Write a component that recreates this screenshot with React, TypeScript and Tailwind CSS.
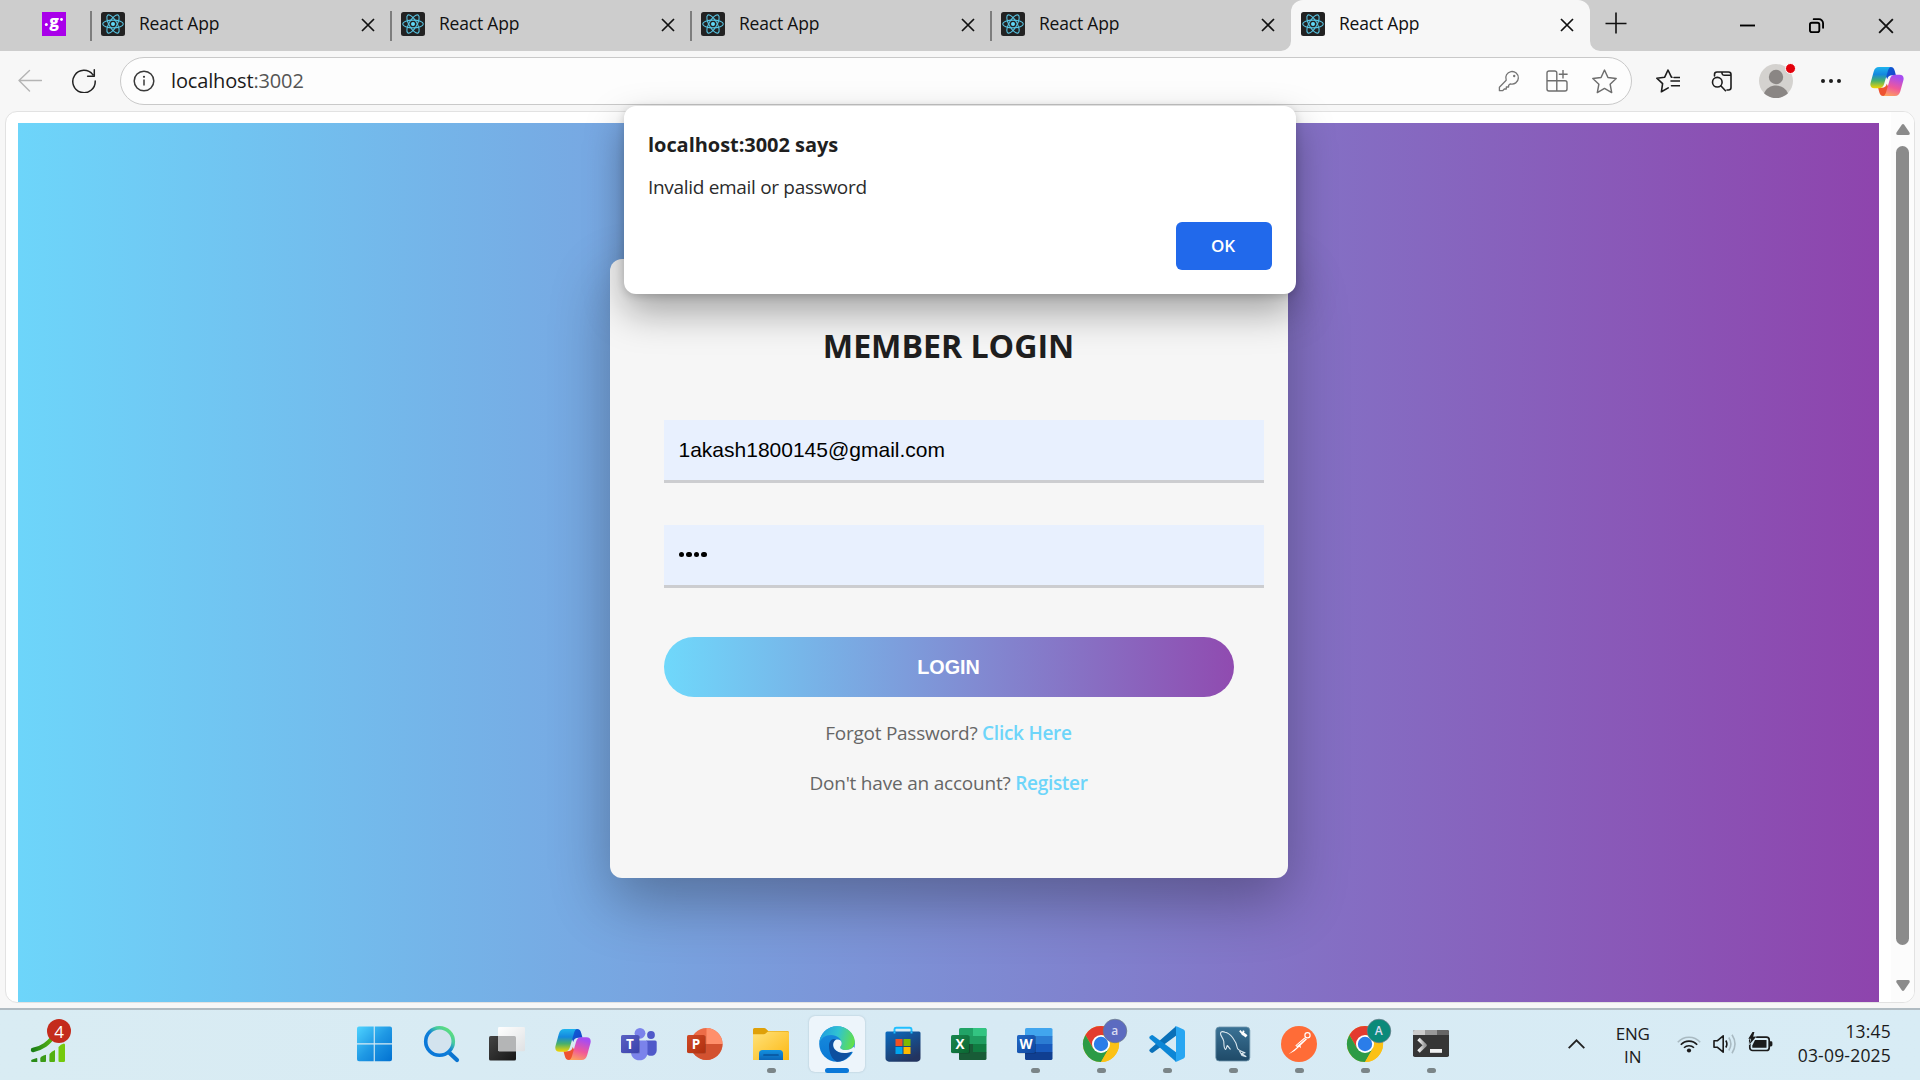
import type { ReactNode } from 'react';

function ReactIcon() {
  return (
    <svg viewBox="0 0 24 24" className="size-6 shrink-0">
      <rect width="24" height="24" rx="2.5" fill="#222222" />
      <g fill="none" stroke="#58c4e2" strokeWidth="1.1">
        <ellipse cx="12" cy="12" rx="10.3" ry="3.9" />
        <ellipse cx="12" cy="12" rx="10.3" ry="3.9" transform="rotate(60 12 12)" />
        <ellipse cx="12" cy="12" rx="10.3" ry="3.9" transform="rotate(120 12 12)" />
      </g>
      <circle cx="12" cy="12" r="2" fill="#61dafb" />
    </svg>
  );
}

function CloseX({ size = 14, w = 1.7 }: { size?: number; w?: number }) {
  return (
    <svg viewBox="0 0 14 14" width={size} height={size} className="shrink-0">
      <path d="M1 1L13 13M13 1L1 13" stroke="#111" strokeWidth={w} fill="none" />
    </svg>
  );
}

function Tab({ active = false }: { active?: boolean }) {
  return (
    <div
      className={
        active
          ? 'relative flex h-[51px] w-[299px] items-start rounded-t-xl bg-[#f7f7f7] pt-3 pr-4 pl-[10px]'
          : 'flex h-[51px] w-[300px] items-start pt-3 pr-4'
      }
    >
      {!active && <div className="-mt-px mr-[9px] ml-[-1px] h-[30px] w-[2px] bg-[#7d7d7d]" />}
      <ReactIcon />
      <span className="-mt-px ml-[14px] flex-1 text-[17.5px] leading-6 tracking-[-0.2px] text-[#111]">React App</span>
      <span className="mt-[6px]">
        <CloseX />
      </span>
      {active && (
        <>
          <svg viewBox="0 0 10 10" className="absolute bottom-0 -left-[10px] size-[10px]">
            <path d="M10 0V10H0A10 10 0 0 0 10 0Z" fill="#f7f7f7" />
          </svg>
          <svg viewBox="0 0 10 10" className="absolute -right-[10px] bottom-0 size-[10px]">
            <path d="M0 0V10H10A10 10 0 0 1 0 0Z" fill="#f7f7f7" />
          </svg>
        </>
      )}
    </div>
  );
}

function TabBar() {
  return (
    <div className="flex h-[51px] bg-[#cdcdcd]">
      <div className="flex w-[91px] items-start pt-3 pl-[42px]">
        <svg viewBox="0 0 24 24" className="size-6">
          <rect width="24" height="24" fill="#a900ea" />
          <text x="12" y="15.3" fill="#fff" fontSize="16" fontWeight="800" textAnchor="middle" fontFamily="Open Sans, sans-serif">g</text>
          <circle cx="4.3" cy="12.4" r="1.5" fill="#fff" />
          <circle cx="19.5" cy="7.5" r="1.4" fill="#fff" />
        </svg>
      </div>
      <Tab />
      <Tab />
      <Tab />
      <Tab />
      <Tab active />
      <svg viewBox="0 0 22 22" className="mt-3 ml-[15px] size-[22px]">
        <path d="M11 .5V21.5M.5 11.5H21.5" stroke="#111" strokeWidth="1.6" />
      </svg>
      <div className="mr-[26px] ml-auto flex items-center gap-[54px]">
        <svg viewBox="0 0 16 16" className="size-[15px]">
          <path d="M0 8H16" stroke="#000" strokeWidth="2" />
        </svg>
        <svg viewBox="0 0 16 16" className="size-[15px]" fill="none" stroke="#000" strokeWidth="2">
          <rect x="1" y="5" width="10" height="10" rx="2" />
          <path d="M5 1.2H10.5A4.4 4.4 0 0 1 15 5.6V10.5" strokeLinecap="round" />
        </svg>
        <CloseX size={16} w={1.6} />
      </div>
    </div>
  );
}

function CopilotIcon({ id, className }: { id: string; className: string }) {
  return (
    <svg viewBox="0 0 36 33" className={className}>
      <defs>
        <linearGradient id={id + 'a'} x1="0" y1="0" x2="0" y2="1">
          <stop offset="0" stopColor="#1fb4ee" />
          <stop offset=".35" stopColor="#1488de" />
          <stop offset=".65" stopColor="#48b06c" />
          <stop offset="1" stopColor="#f6d500" />
        </linearGradient>
        <linearGradient id={id + 'b'} x1=".3" y1="0" x2="0" y2="1">
          <stop offset="0" stopColor="#a84df0" />
          <stop offset=".5" stopColor="#f0589a" />
          <stop offset="1" stopColor="#ffae55" />
        </linearGradient>
        <linearGradient id={id + 'c'} x1="0" y1="0" x2="1" y2="1">
          <stop offset="0" stopColor="#0b62d6" />
          <stop offset="1" stopColor="#1b3fc8" />
        </linearGradient>
      </defs>
      <path d="M17 1H22C24.5 1 25.5 2.5 26.2 5L27.5 9.8H23.5C20.5 9.8 19 11 18.2 14L16 9Z" fill={`url(#${id}c)`} />
      <path d="M19 32H14C11.5 32 10.5 30.5 9.8 28L8.5 23.2H12.5C15.5 23.2 17 22 17.8 19L20 24Z" fill="#ee5331" />
      <path d="M9.5 1H22.5C20.7 1 19.8 2.5 19 5L15 19C14 22.3 12.3 23.7 9.3 23.7H4.5C1.2 23.7-.3 21.5.5 18L3.8 6C4.8 2.6 6.3 1 9.5 1Z" fill={`url(#${id}a)`} />
      <path d="M26.5 32H13.5C15.3 32 16.2 30.5 17 28L21 14C22 10.7 23.7 9.3 26.7 9.3H31.5C34.8 9.3 36.3 11.5 35.5 15L32.2 27C31.2 30.4 29.7 32 26.5 32Z" fill={`url(#${id}b)`} />
    </svg>
  );
}

function Toolbar() {
  return (
    <div className="flex h-[60px] items-start bg-[#f7f7f7] pt-[6px]">
      <div className="flex h-12 w-[120px] items-center pl-[18px]">
        <svg viewBox="0 0 24 24" className="size-6" fill="none" stroke="#b4b4b4" strokeWidth="1.4" strokeLinecap="round" strokeLinejoin="round">
          <path d="M23.5 11.5H1M11.5 1.5L1 11.5L11.5 22" />
        </svg>
        <svg viewBox="0 0 24 24" className="ml-[30px] size-6" fill="none" stroke="#222" strokeWidth="1.5" strokeLinecap="round" strokeLinejoin="round">
          <path d="M20.8 5.6A11.2 11.2 0 1 0 23.2 12M22.3.8V7.2H15.6" />
        </svg>
      </div>
      <div className="flex h-12 w-[1512px] items-center rounded-full border border-[#c9c9c9] bg-[#fdfdfd] pr-[14px] pl-3">
        <svg viewBox="0 0 22 22" className="size-[22px]" fill="none" stroke="#3a3a3a" strokeWidth="1.5">
          <circle cx="11" cy="11" r="9.8" />
          <path d="M11 9.5V15.5" />
          <circle cx="11" cy="6.8" r="1.1" fill="#3a3a3a" stroke="none" />
        </svg>
        <span className="ml-4 flex-1 text-xl tracking-[-0.15px] text-[#1b1b1b]">
          localhost<span className="text-[#555]">:3002</span>
        </span>
        <svg viewBox="0 0 22 22" className="size-[22px]" fill="none" stroke="#757575" strokeWidth="1.3" strokeLinejoin="round">
          <path d="M8.2 10.2A6.3 6.3 0 1 1 12.4 13.9L10.6 15.2V17H8.3V19H6.3L4.6 20.7H1.4V17.2Z" />
          <circle cx="16.2" cy="6" r="1.2" fill="#757575" stroke="none" />
        </svg>
        <svg viewBox="0 0 22 22" className="ml-[26px] size-[22px]" fill="none" stroke="#6e6e6e" strokeWidth="1.4">
          <path d="M10.8 10.8V3A2 2 0 0 0 8.8 1H3A2 2 0 0 0 1 3V19A2 2 0 0 0 3 21H19A2 2 0 0 0 21 19V12.8A2 2 0 0 0 19 10.8H1M10.8 10.8V21M17 0V8.6M12.8 4.3H21.6" />
        </svg>
        <svg viewBox="0 0 24 24" className="ml-6 size-[25px]" fill="none" stroke="#6e6e6e" strokeWidth="1.4" strokeLinejoin="round">
          <path d="M12 1L15.3 8.2L23.2 9.2L17.4 14.6L18.9 22.6L12 18.7L5.1 22.6L6.6 14.6L.8 9.2L8.7 8.2Z" />
        </svg>
      </div>
      <div className="flex h-12 flex-1 items-center pr-4">
        <svg viewBox="0 0 24 24" className="ml-6 size-6" fill="none" stroke="#1d1d1d" strokeWidth="1.6" strokeLinejoin="round" strokeLinecap="round">
          <path d="M16 8.2H15.4L12 1L8.7 8.2L.8 9.2L6.6 14.6L5.4 22.8L12.2 18.9M15 12H23.5M18 8.5H23.5M15.5 16.7H23.5" />
        </svg>
        <svg viewBox="0 0 22 22" className="ml-[31px] size-[22px]" fill="none" stroke="#1d1d1d" strokeWidth="1.6" strokeLinecap="round">
          <path d="M3.5 6V4.5A2.5 2.5 0 0 1 6 2H17.5A2.5 2.5 0 0 1 20 4.5V17.5A2.5 2.5 0 0 1 17.5 20H16M11 2V3.5A2 2 0 0 0 13 5.2H20" />
          <circle cx="6.3" cy="12.2" r="4.8" />
          <path d="M9.8 15.8L14.5 20.7" />
        </svg>
        <div className="relative ml-[26px] size-[34px]">
          <svg viewBox="0 0 34 34" className="size-[34px]">
            <circle cx="17" cy="17" r="17" fill="#d4d2cf" />
            <circle cx="17" cy="13" r="7.2" fill="#8a8684" />
            <path d="M5 29.2C7.5 24 11.8 21.5 17 21.5S26.5 24 29 29.2A17 17 0 0 1 5 29.2Z" fill="#8a8684" />
          </svg>
          <span className="absolute -top-px -right-[3px] size-[11px] rounded-full border border-white bg-[#e3000b]" />
        </div>
        <div className="ml-7 flex gap-1">
          <span className="size-1 rounded-full bg-[#1d1d1d]" />
          <span className="size-1 rounded-full bg-[#1d1d1d]" />
          <span className="size-1 rounded-full bg-[#1d1d1d]" />
        </div>
        <CopilotIcon id="tb" className="ml-auto h-[31px] w-[34px]" />
      </div>
    </div>
  );
}

function Dot() {
  return <span className="size-[5.5px] rounded-full bg-black" />;
}

function LoginCard() {
  return (
    <div className="flex h-[619px] w-[678px] flex-col items-center rounded-xl bg-[#f6f6f6] px-[54px] shadow-[0_23px_60px_rgba(0,0,0,0.3)]">
      <h1 className="mt-[63px] text-[32.2px] leading-[48px] font-bold tracking-[-0.05px] text-[#1f1f1f]">MEMBER LOGIN</h1>
      <div className="mt-[50px] h-[63px] w-[600px] self-start border-b-[3px] border-[#cccdd0] bg-[#e8f0fe] pl-[15px] font-['Liberation_Sans',sans-serif] text-[21px] leading-[60px] text-black">
        1akash1800145@gmail.com
      </div>
      <div className="mt-[42px] flex h-[63px] w-[600px] items-center gap-[2px] self-start border-b-[3px] border-[#cccdd0] bg-[#e8f0fe] pb-px pl-[15px]">
        <Dot />
        <Dot />
        <Dot />
        <Dot />
      </div>
      <button className="mt-[49px] h-[60px] w-full rounded-full bg-linear-to-r/srgb from-[#6fd8fb] to-[#904bb0] pt-px font-['Liberation_Sans',sans-serif] text-[19.8px] font-bold text-white">
        LOGIN
      </button>
      <p className="mt-[21px] text-[19px] leading-[30px] tracking-[-0.26px] text-[#666]">
        Forgot Password? <span className="font-semibold text-[#6dd5fa]">Click Here</span>
      </p>
      <p className="mt-5 text-[19px] leading-[30px] tracking-[-0.21px] text-[#666]">
        Don't have an account? <span className="font-semibold tracking-[-0.3px] text-[#6dd5fa]">Register</span>
      </p>
    </div>
  );
}

function AlertDialog() {
  return (
    <div className="absolute top-[106px] left-[624px] flex h-[188px] w-[672px] flex-col rounded-xl bg-white px-6 pt-[25px] pb-6 shadow-[0_18px_38px_rgba(0,0,0,0.34),0_2px_8px_rgba(0,0,0,0.16)]">
      <h2 className="text-xl leading-7 font-bold tracking-[-0.05px] text-[#1f1f1f]">localhost:3002 says</h2>
      <p className="mt-[14px] text-[19px] leading-7 tracking-[-0.31px] text-[#2b2b2b]">Invalid email or password</p>
      <button className="mt-auto h-12 w-24 self-end rounded-md bg-[#2169eb] pr-[2px] pb-px text-[17px] font-semibold text-white">OK</button>
    </div>
  );
}

function Viewport() {
  return (
    <div className="h-[897px] bg-[#f7f7f7] pr-[5px] pb-[5px] pl-[5px]">
      <div className="flex h-full overflow-hidden rounded-xl border border-[#e2e2e2] bg-white pl-3">
        <div className="mt-[11px] flex w-[1861px] justify-center bg-linear-to-r/srgb from-[#6dd5fa] to-[#8e44ad] pt-[136px]">
          <LoginCard />
        </div>
        <div className="ml-3 flex flex-1 flex-col items-center bg-[#fcfcfc] pt-3 pb-[11px]">
          <svg viewBox="0 0 14 11" className="h-[11px] w-[14px]">
            <path d="M5.8.8Q7-.6 8.2.8L13.5 8.5Q14.4 11 12 11H2Q-.4 11 .5 8.5Z" fill="#8b8b8b" />
          </svg>
          <div className="mt-[11px] h-[799px] w-[13px] rounded-full bg-[#8b8b8b]" />
          <svg viewBox="0 0 14 11" className="mt-auto h-[11px] w-[14px] rotate-180">
            <path d="M5.8.8Q7-.6 8.2.8L13.5 8.5Q14.4 11 12 11H2Q-.4 11 .5 8.5Z" fill="#8b8b8b" />
          </svg>
        </div>
      </div>
    </div>
  );
}

const box = 'size-9 overflow-visible';

function OfficeTile({ letter, from, to }: { letter: string; from: string; to: string }) {
  return (
    <>
      <defs>
        <linearGradient id={'tile' + letter} x1="0" y1="0" x2="1" y2="1">
          <stop offset="0" stopColor={from} />
          <stop offset="1" stopColor={to} />
        </linearGradient>
      </defs>
      <rect x="1" y="9.5" width="18" height="18" rx="1.6" fill="#000" opacity=".2" />
      <rect x="0" y="9" width="18" height="18" rx="1.6" fill={`url(#tile${letter})`} />
      <text x="9" y="22.8" fontSize="13.5" fontWeight="700" fill="#fff" textAnchor="middle" fontFamily="Open Sans, sans-serif">
        {letter}
      </text>
    </>
  );
}

function Stripes({ id, colors }: { id: string; colors: string[] }) {
  return (
    <>
      <clipPath id={id}>
        <rect x="8" y="2" width="27.5" height="32" rx="1.6" />
      </clipPath>
      <g clipPath={`url(#${id})`}>
        {colors.map((c, i) => (
          <rect key={c} x="8" y={2 + i * 8} width="28" height="8.2" fill={c} />
        ))}
      </g>
    </>
  );
}

function Windows() {
  return (
    <svg viewBox="0 0 36 36" className={box}>
      <defs>
        <linearGradient id="win" gradientUnits="userSpaceOnUse" x1="0" y1="0" x2="36" y2="36">
          <stop offset="0" stopColor="#4fd4ff" />
          <stop offset=".5" stopColor="#1f98e4" />
          <stop offset="1" stopColor="#006fd0" />
        </linearGradient>
      </defs>
      <path d="M2 .5H16.7V17.2H0V2.5A2 2 0 0 1 2 .5ZM17.8.5H33A2 2 0 0 1 35 2.5V17.2H17.8ZM0 18.5H16.7V35.2H2A2 2 0 0 1 0 33.2ZM17.8 18.5H35V33.2A2 2 0 0 1 33 35.2H17.8Z" fill="url(#win)" />
    </svg>
  );
}

function Search() {
  return (
    <svg viewBox="0 0 36 36" className={box} fill="none">
      <defs>
        <linearGradient id="sea" x1=".9" y1=".1" x2=".3" y2=".8">
          <stop offset="0" stopColor="#5fe07c" />
          <stop offset=".3" stopColor="#46c9a0" />
          <stop offset=".6" stopColor="#1080d8" />
          <stop offset="1" stopColor="#0a78d8" />
        </linearGradient>
      </defs>
      <path d="M25.5 26L34 34" stroke="#0a74d0" strokeWidth="4.2" strokeLinecap="round" />
      <circle cx="16.5" cy="15.5" r="13.8" stroke="url(#sea)" strokeWidth="3.6" fill="#d3e3ee" />
    </svg>
  );
}

function TaskView() {
  return (
    <svg viewBox="0 0 36 36" className={box}>
      <defs>
        <linearGradient id="tv" x1="0" y1="0" x2="1" y2="1">
          <stop offset="0" stopColor="#fff" />
          <stop offset="1" stopColor="#dfe1e3" />
        </linearGradient>
        <linearGradient id="tvd" x1="0" y1="0" x2="1" y2="1">
          <stop offset="0" stopColor="#444" />
          <stop offset="1" stopColor="#161616" />
        </linearGradient>
      </defs>
      <rect x="0" y="10" width="27" height="24.5" rx="1.6" fill="url(#tvd)" />
      <rect x="9" y="1" width="27" height="24.3" rx="1.4" fill="url(#tv)" />
      <path d="M9 10H25.5A1.5 1.5 0 0 1 27 11.5V25.3H10.4A1.4 1.4 0 0 1 9 23.9Z" fill="#b4b5b6" />
    </svg>
  );
}

function Teams() {
  return (
    <svg viewBox="0 0 36 36" className={box}>
      <circle cx="30" cy="9" r="3.9" fill="#5059c9" />
      <path d="M25 14.5H34.2A1.5 1.5 0 0 1 35.7 16V24C35.7 27.5 33.3 29.8 30 29.8C28 29.8 26 29 25 27Z" fill="#5059c9" />
      <circle cx="19" cy="7.3" r="5.4" fill="#7b83eb" />
      <path d="M10 14.5H24.5A2 2 0 0 1 26.5 16.5V26C26.5 31 23.5 34.3 18.5 34.3S10 31 10 26Z" fill="#7b83eb" />
      <OfficeTile letter="T" from="#5a62c3" to="#3a41ac" />
    </svg>
  );
}

function PowerPoint() {
  return (
    <svg viewBox="0 0 36 36" className={box}>
      <circle cx="19.5" cy="18" r="16" fill="#ed6c47" />
      <path d="M19.5 2A16 16 0 0 1 35.5 18H19.5Z" fill="#ff8f6b" />
      <path d="M3.5 18H35.5A16 16 0 0 1 3.5 18Z" fill="#d35230" />
      <OfficeTile letter="P" from="#d04a26" to="#b0300f" />
    </svg>
  );
}

function Excel() {
  return (
    <svg viewBox="0 0 36 36" className={box}>
      <Stripes id="xls" colors={['#21a366', '#1f9d60', '#107c41', '#185c37']} />
      <path d="M22 2H33.9A1.6 1.6 0 0 1 35.5 3.6V10H22Z" fill="#33c481" />
      <path d="M8 18H22V34H9.6A1.6 1.6 0 0 1 8 32.4Z" fill="#185c37" />
      <OfficeTile letter="X" from="#18884f" to="#0b6631" />
    </svg>
  );
}

function Word() {
  return (
    <svg viewBox="0 0 36 36" className={box}>
      <Stripes id="doc" colors={['#41a5ee', '#2b7cd3', '#185abd', '#103f91']} />
      <OfficeTile letter="W" from="#2368c4" to="#0d47a1" />
    </svg>
  );
}

function Explorer() {
  return (
    <svg viewBox="0 0 36 36" className={box}>
      <defs>
        <linearGradient id="fol" x1="0" y1="0" x2="1" y2="1">
          <stop offset="0" stopColor="#ffe27a" />
          <stop offset="1" stopColor="#fcb813" />
        </linearGradient>
        <linearGradient id="folb" x1="0" y1="0" x2="0" y2="1">
          <stop offset="0" stopColor="#1291e0" />
          <stop offset="1" stopColor="#0c66b8" />
        </linearGradient>
      </defs>
      <path d="M0 3.5A1.5 1.5 0 0 1 1.5 2H11C12 2 12.6 2.4 13.2 3L15.2 5H34.5A1.5 1.5 0 0 1 36 6.5V12H0Z" fill="#dfa008" />
      <path d="M0 8.3H11C13 8.3 13.5 5.5 15.5 5.5H34.5A1.5 1.5 0 0 1 36 7V34H0Z" fill="url(#fol)" />
      <path d="M6 34V27.5A3.5 3.5 0 0 1 9.5 24H26.5A3.5 3.5 0 0 1 30 27.5V34Z" fill="url(#folb)" />
      <path d="M11 29H25" stroke="#08539b" strokeWidth="1.7" strokeLinecap="round" />
    </svg>
  );
}

function Edge() {
  return (
    <svg viewBox="0 0 36 36" className={box}>
      <defs>
        <linearGradient id="ed1" x1="0" y1=".3" x2="1" y2=".5">
          <stop offset="0" stopColor="#1f9be0" />
          <stop offset=".5" stopColor="#30c3d2" />
          <stop offset="1" stopColor="#62e04a" />
        </linearGradient>
        <linearGradient id="ed2" x1=".3" y1="0" x2=".4" y2="1">
          <stop offset="0" stopColor="#1b8ddd" />
          <stop offset="1" stopColor="#0877d4" />
        </linearGradient>
      </defs>
      <circle cx="18" cy="18" r="17.8" fill="url(#ed2)" />
      <path d="M10 20C10 14.5 14 11.5 17 13.8C13.8 15.5 13.3 20 15.8 23.3C18.5 26.8 25 27.8 32.8 25.3C30 31.5 24.5 35.8 18 35.8C13 33.5 10 27 10 20Z" fill="#0d4f9f" />
      <path d="M.3 16.5C1.3 7 9 .2 18 .2C28 .2 35.8 7.8 35.8 15.5C35.8 20.8 32 24 27 24C23.5 24 21.2 22.8 21.2 21.4C21.2 20.3 22.7 19.7 22.7 17.3C22.7 13 18 9 12 9C6.5 9 2.3 12 .3 16.5Z" fill="url(#ed1)" />
      <path d="M21.2 21.4C21.2 22.8 23.5 24 27 24C30.5 24 33 22.7 34.6 20.5L36.8 26.5L32.8 25.8C25 28.3 18.5 26.8 15.8 23.3C13.3 20 13.8 15.5 17 13.8C20.5 13 22.7 15 22.7 17.3C22.7 19.7 21.2 20.3 21.2 21.4Z" fill="#edf5fb" />
    </svg>
  );
}

function Store() {
  return (
    <svg viewBox="0 0 36 36" className={box}>
      <defs>
        <linearGradient id="sto" x1="0" y1="0" x2=".6" y2="1">
          <stop offset="0" stopColor="#0a6abf" />
          <stop offset="1" stopColor="#23345f" />
        </linearGradient>
      </defs>
      <path d="M9.5 7V3.2A1.7 1.7 0 0 1 11.2 1.7H24.8A1.7 1.7 0 0 1 26.5 3.2V7" fill="none" stroke="#20bfff" strokeWidth="1.9" />
      <path d="M.5 7A1.5 1.5 0 0 1 2 5.5H34A1.5 1.5 0 0 1 35.5 7V32A3.5 3.5 0 0 1 32 35.7H4A3.5 3.5 0 0 1 .5 32Z" fill="url(#sto)" />
      <path d="M9.5 5.5V7.6M26.5 5.5V7.6" stroke="#20bfff" strokeWidth="1.9" />
      <rect x="10.5" y="13" width="7" height="7" fill="#f25022" />
      <rect x="18.5" y="13" width="7" height="7" fill="#7fba00" />
      <rect x="10.5" y="21" width="7" height="7" fill="#00a4ef" />
      <rect x="18.5" y="21" width="7" height="7" fill="#ffb900" />
    </svg>
  );
}

function Chrome({ letter, color }: { letter: string; color: string }) {
  return (
    <svg viewBox="0 0 36 36" className={box}>
      <circle cx="18" cy="18" r="18" fill="#fbc116" />
      <path d="M2.41 9A18 18 0 0 1 33.59 9H18L10.2 22.5Z" fill="#e33b2e" />
      <path d="M2.41 9A18 18 0 0 0 18 36L25.8 22.5L10.2 22.5Z" fill="#2c9b46" />
      <path d="M18 9H33.59A18 18 0 0 1 18 36L25.8 22.5Z" fill="#fbc116" />
      <circle cx="18" cy="18" r="9" fill="#fff" />
      <circle cx="18" cy="18" r="7.2" fill="#2b7de9" />
      <circle cx="32" cy="5" r="11.8" fill={color} stroke="#6b7a86" strokeWidth=".7" />
      <text x="31.7" y="9" fontSize="12" fontWeight="600" fill="#d9dcf2" textAnchor="middle" fontFamily="Open Sans, sans-serif">
        {letter}
      </text>
    </svg>
  );
}

function VSCode() {
  return (
    <svg viewBox="0 0 36 36" className={box}>
      <path d="M27 .2L.8 23.2Q-.3 24.4.8 25.4L2 26.5Q3 27.4 4.2 26.6L27 9.7Z" fill="#0a70b8" />
      <path d="M27 35.8L.8 12.8Q-.3 11.7.8 10.6L2 9.5Q3 8.6 4.2 9.4L27 26.3Z" fill="#0c86d6" />
      <path d="M26 .3Q27 0 28 .4L34.6 3.5Q36 4.3 36 5.8V30.2Q36 31.7 34.6 32.5L28 35.6Q27 36 26 35.7Q27 35.2 27 33V3Q27 .8 26 .3Z" fill="#28a6f2" />
    </svg>
  );
}

function MySQL() {
  return (
    <svg viewBox="0 0 36 36" className={box} fill="none">
      <defs>
        <linearGradient id="sql" x1="0" y1="0" x2="0" y2="1">
          <stop offset="0" stopColor="#3a7295" />
          <stop offset="1" stopColor="#1f4a68" />
        </linearGradient>
      </defs>
      <rect x=".8" y="1" width="34" height="34" rx="3.5" fill="url(#sql)" stroke="#6f95ac" strokeWidth=".8" />
      <path d="M5.5 7C6.2 5.3 8.3 5.3 10 6.3C15 7 21 14 22.5 22.5C23.5 24 25.5 25.3 30 26.8L26.5 27.5L31.3 30.8M5.5 7C5 9.5 8.3 12 8.8 15.5C9 19.5 8.8 22.5 10.5 23.5C11.8 23 11.5 20.5 12.2 19.5C13.5 20.5 14.3 22 15.5 23.5M24.5 25L27 29.5L31.3 30.8" stroke="#dbe8ef" strokeWidth="1.1" strokeLinejoin="round" />
      <path d="M24.8 4.6L27.5 7.8L28.8 4.6" stroke="#fff" strokeWidth="1.8" />
      <path d="M27.3 7L31.6 10.4" stroke="#fff" strokeWidth="3" />
    </svg>
  );
}

function Postman() {
  return (
    <svg viewBox="0 0 36 36" className={box}>
      <circle cx="18" cy="18" r="18" fill="#ff6c37" />
      <circle cx="26.5" cy="9.3" r="2.6" fill="#ff6c37" stroke="#fff" strokeWidth="1.2" />
      <path d="M23.5 11.5L14.3 19.5L16 21.2L7.5 28.3L13.5 25L18.3 20.8L20 22.3L19.5 19.5L26 13.2Z" fill="#fff" />
      <path d="M15.5 20L24.5 12.5" stroke="#ff6c37" strokeWidth=".7" />
    </svg>
  );
}

function Terminal() {
  return (
    <svg viewBox="0 0 36 36" className={box}>
      <defs>
        <linearGradient id="ter" x1="0" y1="0" x2="1" y2="0">
          <stop offset="0" stopColor="#f2f2f2" />
          <stop offset="1" stopColor="#999" />
        </linearGradient>
      </defs>
      <rect y="4" width="36" height="27" rx="1.8" fill="#363636" />
      <path d="M1.8 4H12V9H0V5.8A1.8 1.8 0 0 1 1.8 4Z" fill="#ccc" />
      <path d="M12 4H24V9H12Z" fill="#999" />
      <path d="M24 4H34.2A1.8 1.8 0 0 1 36 5.8V9H24Z" fill="#666" />
      <path d="M5.5 13L12 19.3L5.5 25.5" fill="none" stroke="url(#ter)" strokeWidth="3.6" strokeLinejoin="round" />
      <rect x="17" y="23" width="12" height="3.8" fill="#f0f0f0" />
    </svg>
  );
}

function TaskItem({ children, running = false, active = false }: { children: ReactNode; running?: boolean; active?: boolean }) {
  return (
    <div className="flex w-[66px] justify-center">
      <div
        className={
          active
            ? 'relative flex size-14 items-center justify-center rounded-md bg-[#edf5fb] shadow-[0_0_2px_rgba(80,110,130,0.35)]'
            : 'relative flex size-14 items-center justify-center'
        }
      >
        {children}
        {running && <span className="absolute bottom-[-1px] left-[24px] h-[5px] w-[9px] rounded-full bg-[#7b8588]" />}
        {active && <span className="absolute bottom-[-1px] left-4 h-[5px] w-6 rounded-full bg-[#0a78d8]" />}
      </div>
    </div>
  );
}

function Taskbar() {
  return (
    <div className="flex h-[72px] border-t-2 border-[#b0bbc2] bg-linear-to-r from-[#d9ecf3] via-[#d7eaf4] to-[#d8ecf5]">
      <div className="w-[342px] pt-[18px] pl-[31px]">
        <div className="relative h-[34px] w-9">
          <svg viewBox="0 0 36 34" className="h-[34px] w-9 overflow-visible">
            <defs>
              <linearGradient id="bars" x1="0" y1="0" x2="1" y2="0">
                <stop offset="0" stopColor="#1c8018" />
                <stop offset="1" stopColor="#5cb812" />
              </linearGradient>
            </defs>
            <path d="M2 22C12 20 17 15.5 23 8" stroke="url(#bars)" strokeWidth="4.4" fill="none" strokeLinecap="round" />
            <path d="M2 31.2L5.8 30Q6.5 30.3 6.3 31.5V34H1.5Q0 34 0 32.8Q.3 31.6 2 31.2Z" fill="#2a8c18" />
            <path d="M10.2 28.8Q12.5 27.2 15 26.7V33.2Q15 34 14 34H10.2Q9.3 34 9.3 33V30Z" fill="#3c9b18" />
            <path d="M18.5 26Q20.5 23.5 24 22V33Q24 34 23 34H19.3Q18.3 34 18.3 33Z" fill="#53b010" />
            <path d="M27.5 19Q29.5 16 33 15.5Q34 15.6 34 17V32.8Q34 34 32.8 34H28.6Q27.5 34 27.5 33Z" fill="#74ca0c" />
          </svg>
          <span className="absolute top-[-9px] left-4 flex size-6 items-center justify-center rounded-full bg-[#c42b1c] text-[17px] leading-none text-white">4</span>
        </div>
      </div>
      <div className="flex pt-[6px]">
        <TaskItem><Windows /></TaskItem>
        <TaskItem><Search /></TaskItem>
        <TaskItem><TaskView /></TaskItem>
        <TaskItem><CopilotIcon id="task" className="h-[33px] w-9" /></TaskItem>
        <TaskItem><Teams /></TaskItem>
        <TaskItem><PowerPoint /></TaskItem>
        <TaskItem running><Explorer /></TaskItem>
        <TaskItem active><Edge /></TaskItem>
        <TaskItem><Store /></TaskItem>
        <TaskItem><Excel /></TaskItem>
        <TaskItem running><Word /></TaskItem>
        <TaskItem running><Chrome letter="a" color="#5c6bc0" /></TaskItem>
        <TaskItem running><VSCode /></TaskItem>
        <TaskItem running><MySQL /></TaskItem>
        <TaskItem running><Postman /></TaskItem>
        <TaskItem running><Chrome letter="A" color="#0b8a7a" /></TaskItem>
        <TaskItem running><Terminal /></TaskItem>
      </div>
      <div className="ml-auto flex items-start pr-[29px] text-[#1b1b1b]">
        <svg viewBox="0 0 17 10" className="mt-[29px] mr-[30px] h-[10px] w-[17px]" fill="none" stroke="#222" strokeWidth="1.8">
          <path d="M.7 9.2L8.5 1.3L16.3 9.2" />
        </svg>
        <div className="mt-3 w-[36px] text-center text-[17px] leading-[23px] tracking-[-0.2px]">
          ENG
          <br />
          IN
        </div>
        <svg viewBox="0 0 24 18" className="mt-[25px] ml-[26px] h-[18px] w-6" fill="none" stroke="#1b1b1b" strokeWidth="1.6">
          <path d="M.8 7.2A15 15 0 0 1 23.2 7.2" stroke="#a9bac2" />
          <path d="M3.8 9.8A11 11 0 0 1 20.2 9.8M7 12.8A7 7 0 0 1 17 12.8" />
          <circle cx="12" cy="15.5" r="2.1" fill="#1b1b1b" stroke="none" />
        </svg>
        <svg viewBox="0 0 24 20" className="mt-6 ml-[12px] h-5 w-6" fill="none" stroke="#1b1b1b" strokeWidth="1.6" strokeLinejoin="round">
          <path d="M1 6.8H4.2L10.2 1.8V18.2L4.2 13.2H1Z" />
          <path d="M12.8 6.5Q15 10 12.8 13.5" />
          <path d="M15.8 3.5Q20 10 15.8 16.5M19 .8Q25 10 19 19.2" stroke="#a9bac2" />
        </svg>
        <svg viewBox="0 0 25 20" className="mt-[22px] ml-[11px] h-5 w-[25px]">
          <rect x="1.8" y="5.2" width="19.4" height="13.3" rx="2.8" fill="none" stroke="#1b1b1b" strokeWidth="1.7" />
          <path d="M7 8H18.5V15.8H4.3V13.5Z" fill="#1b1b1b" />
          <path d="M21.5 9.3H23A1.4 1.4 0 0 1 24.4 10.7V13A1.4 1.4 0 0 1 23 14.4H21.5Z" fill="#1b1b1b" />
          <path d="M4.8-.5L.3 6.8H3.2L1.5 12.5L8.2 4.8H5.2L6.5-.5Z" fill="#1b1b1b" stroke="#d8ecf5" strokeWidth="1" paintOrder="stroke" />
        </svg>
        <div className="mt-[9px] ml-[25px] text-right text-[17.5px] leading-6 tracking-[0.2px]">
          13:45
          <br />
          03-09-2025
        </div>
      </div>
    </div>
  );
}

export default function App() {
  return (
    <div className="relative h-[1080px] w-[1920px] overflow-hidden bg-[#f7f7f7] font-['Open_Sans','Noto_Sans',sans-serif]">
      <TabBar />
      <Toolbar />
      <Viewport />
      <Taskbar />
      <AlertDialog />
    </div>
  );
}
